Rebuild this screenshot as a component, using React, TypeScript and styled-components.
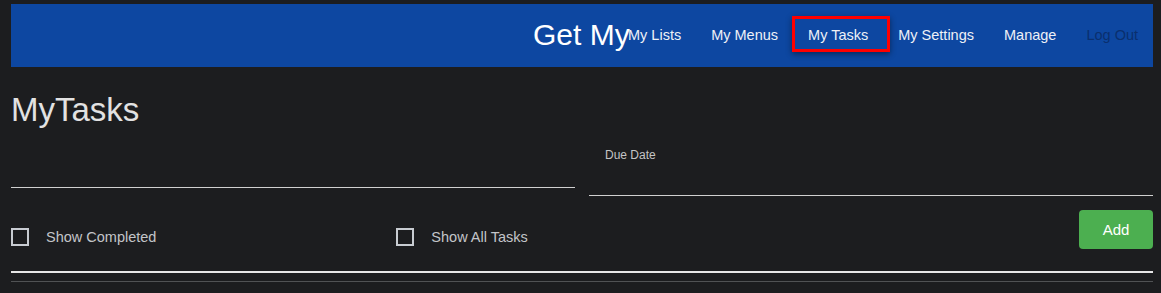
import React from "react";
import styled, { createGlobalStyle } from "styled-components";

const Global = createGlobalStyle`
  html, body { margin: 0; padding: 0; background: #1c1d1f; }
  body { font-family: "Liberation Sans", Arial, sans-serif; color: #e0e0e0; }
`;

const Page = styled.div`
  padding: 4px 8px 0 11px;
  min-height: 293px;
  box-sizing: border-box;
`;

const NavBar = styled.nav`
  height: 63px;
  background: #0d47a1;
  display: flex;
  align-items: center;
  justify-content: flex-end;
`;

const Brand = styled.div`
  width: 80px;
  white-space: nowrap;
  font-size: 30px;
  color: #ffffff;
  line-height: 1;
  margin-top: -1px;
`;

const NavLink = styled.a<{ $active?: boolean; $muted?: boolean }>`
  position: relative;
  display: block;
  padding: 6px 15px;
  font-size: 14.5px;
  line-height: 16px;
  text-decoration: none;
  color: ${(p) => (p.$muted ? "#0a2f6e" : "#eef1f7")};
  white-space: nowrap;
  margin-top: -2px;
  ${(p) =>
    p.$active
      ? `&::after {
          content: "";
          position: absolute;
          top: -5px;
          bottom: -3px;
          left: -1px;
          right: -7px;
          border: 3px solid #ff0000;
          box-shadow: 0 2px 6px rgba(0,0,0,0.45);
          pointer-events: none;
        }`
      : ""}
`;

const Heading = styled.h1`
  margin: 24px 0 0 0;
  font-size: 33px;
  font-weight: normal;
  line-height: 37px;
  color: #e2e2e2;
`;

const InputGrid = styled.div`
  display: grid;
  grid-template-columns: 1fr 1fr;
  column-gap: 14px;
  margin-top: 20px;
`;

const Field = styled.div<{ $h: number }>`
  height: ${(p) => p.$h}px;
  border-bottom: 1px solid #d0d0d0;
`;

const FieldLabel = styled.span`
  display: block;
  padding: 0 0 0 16px;
  font-size: 12px;
  color: #c4c4c4;
`;

const ControlGrid = styled.div`
  display: grid;
  grid-template-columns: 1fr 1fr 1fr;
  column-gap: 14px;
  margin-top: 14px;
  align-items: start;
`;

const CheckLabel = styled.label`
  display: flex;
  align-items: center;
  margin-top: 18px;
  font-size: 14.5px;
  color: #c3c5c9;
`;

const Box = styled.span`
  width: 18px;
  height: 18px;
  box-sizing: border-box;
  border: 2px solid #c8ccd2;
  margin-right: 17px;
  flex: none;
`;

const ButtonCell = styled.div`
  display: flex;
  justify-content: flex-end;
`;

const AddButton = styled.button`
  width: 74px;
  height: 39px;
  border: none;
  border-radius: 4px;
  background: #4caf50;
  color: #ffffff;
  font-family: "Liberation Sans", Arial, sans-serif;
  font-size: 15px;
`;

const Divider = styled.div`
  margin-top: 22px;
  height: 2px;
  background: #e6e6e6;
`;

const SubDivider = styled.div`
  margin-top: 8px;
  height: 1px;
  background: #505254;
`;

export default function App() {
  return (
    <>
      <Global />
      <Page>
        <NavBar>
          <Brand>Get My</Brand>
          <NavLink>My Lists</NavLink>
          <NavLink>My Menus</NavLink>
          <NavLink $active>My Tasks</NavLink>
          <NavLink>My Settings</NavLink>
          <NavLink>Manage</NavLink>
          <NavLink $muted>Log Out</NavLink>
        </NavBar>
        <Heading>MyTasks</Heading>
        <InputGrid>
          <Field $h={39} />
          <Field $h={47}>
            <FieldLabel>Due Date</FieldLabel>
          </Field>
        </InputGrid>
        <ControlGrid>
          <CheckLabel>
            <Box />
            Show Completed
          </CheckLabel>
          <CheckLabel>
            <Box />
            Show All Tasks
          </CheckLabel>
          <ButtonCell>
            <AddButton>Add</AddButton>
          </ButtonCell>
        </ControlGrid>
        <Divider />
        <SubDivider />
      </Page>
    </>
  );
}
